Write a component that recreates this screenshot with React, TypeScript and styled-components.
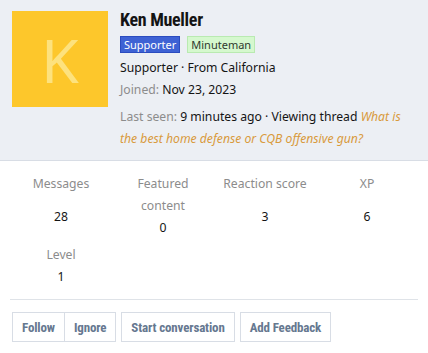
import React from 'react';
import styled, { createGlobalStyle } from 'styled-components';

const GlobalStyle = createGlobalStyle`
  html, body {
    margin: 0;
    padding: 0;
    background: #fff;
  }
  body {
    font-family: 'Segoe UI', 'Noto Sans', 'Liberation Sans', sans-serif;
    font-size: 12.2px;
    color: #141414;
  }
`;

const Card = styled.div`
  width: 428px;
  background: #fff;
`;

const Header = styled.div`
  display: flex;
  gap: 12px;
  padding: 11px 12px 10px 12px;
  background: #eceff4;
  border-bottom: 1px solid #d8dde5;
  min-height: 139px;
`;

const Avatar = styled.div`
  flex: none;
  width: 96px;
  height: 96px;
  background: #fdc72b;
  color: #fde27e;
  font-family: 'Noto Sans', sans-serif;
  font-size: 61px;
  line-height: 1;
  display: flex;
  align-items: center;
  justify-content: center;
`;

const Info = styled.div`
  display: flex;
  flex-direction: column;
  min-width: 0;
  padding-top: 1px;
`;

const Name = styled.h3`
  margin: -5px 0 0;
  font-family: Roboto, 'Liberation Sans', sans-serif;
  font-size: 18px;
  font-weight: 700;
  font-stretch: 85%;
  line-height: 26px;
  letter-spacing: -0.3px;
  color: #141414;
`;

const Badges = styled.div`
  display: flex;
  gap: 7px;
  margin-top: 3px;
`;

const Badge = styled.span<{ $tone: 'blue' | 'green' }>`
  font-size: 11px;
  line-height: 15px;
  padding: 0 3px;
  border: 1px solid ${p => (p.$tone === 'blue' ? '#2b4cbf' : '#b9eab1')};
  background: ${p => (p.$tone === 'blue' ? '#3e62d4' : '#d5f8ce')};
  color: ${p => (p.$tone === 'blue' ? '#fff' : '#2f3a2e')};
`;

const Line = styled.div<{ $gap?: number }>`
  margin-top: ${p => p.$gap ?? 0}px;
  line-height: 22px;
`;

const Muted = styled.span`
  color: #8c8c8c;
`;

const ThreadLink = styled.a`
  color: #d99a3c;
  font-style: italic;
  text-decoration: none;
`;

const Body = styled.div`
  padding: 12px 12px 0;
`;

const Stats = styled.div`
  display: grid;
  grid-template-columns: repeat(4, 1fr);
  row-gap: 1px;
  padding: 0 0 7px;
  margin: 0 -2px;
  border-bottom: 1px solid #dfe3e8;
`;

const Stat = styled.dl`
  margin: 0;
  padding: 0 4px;
  display: flex;
  flex-direction: column;
  align-items: center;
  text-align: center;
  line-height: 22px;
`;

const StatLabel = styled.dt`
  color: #8c8c8c;
`;

const StatValue = styled.dd`
  margin: 0;
  flex: 1;
  display: flex;
  align-items: center;
  padding-bottom: 4px;
  color: #141414;
`;

const Actions = styled.div`
  display: flex;
  gap: 5px;
  padding: 12px 0;
`;

const Group = styled.div`
  display: flex;
  & > button + button {
    border-left: none;
  }
`;

const Button = styled.button`
  height: 30px;
  padding: 0 9px;
  background: #fff;
  border: 1px solid #d8dde5;
  font-family: Roboto, 'Liberation Sans', sans-serif;
  font-size: 13px;
  font-weight: 700;
  font-stretch: 85%;
  letter-spacing: -0.15px;
  color: #667890;
  cursor: pointer;
`;

const stats = [
  { label: 'Messages', value: '28' },
  { label: 'Featured content', value: '0' },
  { label: 'Reaction score', value: '3' },
  { label: 'XP', value: '6' },
  { label: 'Level', value: '1' },
];

export default function App() {
  return (
    <>
      <GlobalStyle />
      <Card>
        <Header>
          <Avatar>K</Avatar>
          <Info>
            <Name>Ken Mueller</Name>
            <Badges>
              <Badge $tone="blue">Supporter</Badge>
              <Badge $tone="green">Minuteman</Badge>
            </Badges>
            <Line $gap={4}>Supporter · From California</Line>
            <Line>
              <Muted>Joined:</Muted> Nov 23, 2023
            </Line>
            <Line $gap={5}>
              <Muted>Last seen:</Muted> 9 minutes ago · Viewing thread{' '}
              <ThreadLink href="#">What is the best home defense or CQB offensive gun?</ThreadLink>
            </Line>
          </Info>
        </Header>
        <Body>
          <Stats>
            {stats.map(s => (
              <Stat key={s.label}>
                <StatLabel>{s.label}</StatLabel>
                <StatValue>{s.value}</StatValue>
              </Stat>
            ))}
          </Stats>
          <Actions>
            <Group>
              <Button>Follow</Button>
              <Button>Ignore</Button>
            </Group>
            <Button>Start conversation</Button>
            <Button>Add Feedback</Button>
          </Actions>
        </Body>
      </Card>
    </>
  );
}
